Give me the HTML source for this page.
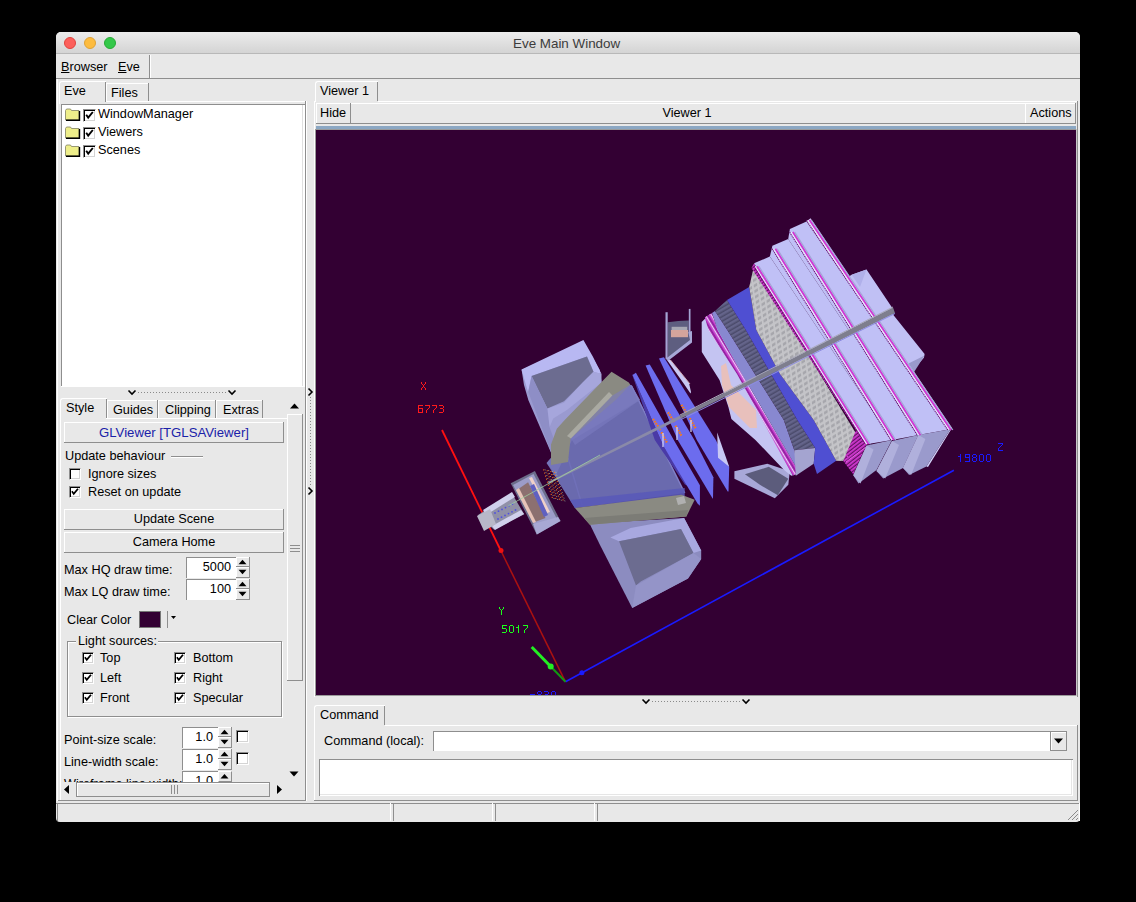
<!DOCTYPE html>
<html><head><meta charset="utf-8">
<style>
*{margin:0;padding:0;box-sizing:border-box}
html,body{width:1136px;height:902px;background:#000;overflow:hidden;font-family:"Liberation Sans",sans-serif;font-size:12.7px;color:#000}
.a{position:absolute}
.t{position:absolute;white-space:nowrap;line-height:1}
#win{position:absolute;left:56px;top:32px;width:1024px;height:790px;background:#e8e8e8;border-radius:5px 5px 4px 4px;overflow:hidden}
#title{position:absolute;left:0;top:0;width:1024px;height:22px;background:linear-gradient(#ececec,#d4d4d4);border-bottom:1px solid #b8b8b8}
.dot{position:absolute;top:5px;width:12px;height:12px;border-radius:50%}
svg.a{overflow:visible}
</style></head><body>
<div id="win">
 <div id="title">
  <div class="dot" style="left:8px;background:#fc605c;border:1px solid #e0443e"></div>
  <div class="dot" style="left:28px;background:#fdbc40;border:1px solid #dea236"></div>
  <div class="dot" style="left:48px;background:#34c84a;border:1px solid #27aa35"></div>
  <div class="t" style="left:457px;top:5px;color:#3c3c3c;font-size:13.4px">Eve Main Window</div>
 </div>
</div>
<div class="a" style="left:0;top:0;width:1136px;height:902px">

<div class="t" style="left:61px;top:61px"><u>B</u>rowser</div>
<div class="t" style="left:118px;top:61px"><u>E</u>ve</div>
<div class="a" style="left:149px;top:55px;width:1px;height:23px;background:#8e8e8e;"></div>
<div class="a" style="left:150px;top:55px;width:1px;height:23px;background:#fff;"></div>
<div class="a" style="left:56px;top:78px;width:1024px;height:1px;background:#8e8e8e;"></div>
<div class="a" style="left:57px;top:79px;width:1px;height:722px;background:#fff;"></div>
<div class="a" style="left:59px;top:81px;width:47px;height:23px;border-top:1px solid #fff;border-left:1px solid #fff;border-radius:3px 0 0 0"></div>
<div class="a" style="left:105px;top:82px;width:1px;height:20px;background:#8e8e8e;"></div>
<div class="t" style="left:64px;top:85px;font-size:12.7px;color:#000;">Eve</div>
<div class="a" style="left:106px;top:83px;width:42px;height:1px;background:#fff;"></div>
<div class="a" style="left:106px;top:83px;width:1px;height:18px;background:#fff;"></div>
<div class="a" style="left:148px;top:83px;width:1px;height:18px;background:#8e8e8e;"></div>
<div class="t" style="left:111px;top:87px;font-size:12.7px;color:#000;">Files</div>
<div class="a" style="left:106px;top:101px;width:200px;height:1px;background:#fff;"></div>
<div class="a" style="left:61px;top:104px;width:245px;height:283px;background:#fff;"></div>
<div class="a" style="left:61px;top:104px;width:245px;height:1px;background:#8e8e8e;"></div>
<div class="a" style="left:61px;top:104px;width:1px;height:283px;background:#8e8e8e;"></div>
<div class="a" style="left:61px;top:386px;width:245px;height:1px;background:#fff;"></div>
<div class="a" style="left:305px;top:104px;width:1px;height:283px;background:#fff;"></div>
<div class="a" style="left:305px;top:104px;width:1px;height:283px;background:#8e8e8e;"></div>
<div class="a" style="left:302px;top:105px;width:1px;height:281px;background:#e0e0e0;"></div>
<svg class="a" style="left:65px;top:108px" width="16" height="13" viewBox="0 0 16 13"><path d="M0.5 2.5 L1.5 1 L5.5 1 L6.5 2.5 L14 2.5 L14 12 L0.5 12 Z" fill="#eeee8a" stroke="#808060" stroke-width="0.8"/><path d="M1 12.2 L14.5 12.2 L14.5 3" stroke="#000" stroke-width="1.4" fill="none"/></svg>
<div class="a" style="left:83px;top:109px;width:13px;height:13px;background:#fff;border-top:1px solid #8e8e8e;border-left:1px solid #8e8e8e;border-right:1px solid #fff;border-bottom:1px solid #fff;box-shadow:inset 1px 1px 0 #000, inset -1px -1px 0 #d4d4d4"></div>
<svg class="a" style="left:83px;top:109px" width="12" height="12" viewBox="0 0 12 12"><path d="M3.2 5.8 L5.2 8.6 L9.8 3" stroke="#000" stroke-width="1.9" fill="none"/></svg>
<div class="t" style="left:98px;top:108px;font-size:12.7px;color:#000;">WindowManager</div>
<svg class="a" style="left:65px;top:126px" width="16" height="13" viewBox="0 0 16 13"><path d="M0.5 2.5 L1.5 1 L5.5 1 L6.5 2.5 L14 2.5 L14 12 L0.5 12 Z" fill="#eeee8a" stroke="#808060" stroke-width="0.8"/><path d="M1 12.2 L14.5 12.2 L14.5 3" stroke="#000" stroke-width="1.4" fill="none"/></svg>
<div class="a" style="left:83px;top:127px;width:13px;height:13px;background:#fff;border-top:1px solid #8e8e8e;border-left:1px solid #8e8e8e;border-right:1px solid #fff;border-bottom:1px solid #fff;box-shadow:inset 1px 1px 0 #000, inset -1px -1px 0 #d4d4d4"></div>
<svg class="a" style="left:83px;top:127px" width="12" height="12" viewBox="0 0 12 12"><path d="M3.2 5.8 L5.2 8.6 L9.8 3" stroke="#000" stroke-width="1.9" fill="none"/></svg>
<div class="t" style="left:98px;top:126px;font-size:12.7px;color:#000;">Viewers</div>
<svg class="a" style="left:65px;top:144px" width="16" height="13" viewBox="0 0 16 13"><path d="M0.5 2.5 L1.5 1 L5.5 1 L6.5 2.5 L14 2.5 L14 12 L0.5 12 Z" fill="#eeee8a" stroke="#808060" stroke-width="0.8"/><path d="M1 12.2 L14.5 12.2 L14.5 3" stroke="#000" stroke-width="1.4" fill="none"/></svg>
<div class="a" style="left:83px;top:145px;width:13px;height:13px;background:#fff;border-top:1px solid #8e8e8e;border-left:1px solid #8e8e8e;border-right:1px solid #fff;border-bottom:1px solid #fff;box-shadow:inset 1px 1px 0 #000, inset -1px -1px 0 #d4d4d4"></div>
<svg class="a" style="left:83px;top:145px" width="12" height="12" viewBox="0 0 12 12"><path d="M3.2 5.8 L5.2 8.6 L9.8 3" stroke="#000" stroke-width="1.9" fill="none"/></svg>
<div class="t" style="left:98px;top:144px;font-size:12.7px;color:#000;">Scenes</div>
<svg class="a" style="left:128px;top:390px" width="8" height="5" viewBox="0 0 8 5"><path d="M0.5 0.5 L4 4 L7.5 0.5" stroke="#000" stroke-width="1.6" fill="none"/></svg>
<svg class="a" style="left:228px;top:390px" width="8" height="5" viewBox="0 0 8 5"><path d="M0.5 0.5 L4 4 L7.5 0.5" stroke="#000" stroke-width="1.6" fill="none"/></svg>
<div class="a" style="left:138px;top:392px;width:90px;height:1px;background:repeating-linear-gradient(90deg,#8a8a8a 0 1px,transparent 1px 3px)"></div>
<div class="a" style="left:60px;top:398px;width:47px;height:21px;border-top:1px solid #fff;border-left:1px solid #fff;border-radius:3px 0 0 0"></div>
<div class="a" style="left:106px;top:399px;width:1px;height:19px;background:#8e8e8e;"></div>
<div class="t" style="left:66px;top:402px;font-size:12.7px;color:#000;">Style</div>
<div class="a" style="left:107px;top:400px;width:51px;height:1px;background:#fff;"></div>
<div class="a" style="left:107px;top:400px;width:1px;height:18px;background:#fff;"></div>
<div class="a" style="left:157px;top:400px;width:1px;height:18px;background:#8e8e8e;"></div>
<div class="t" style="left:113px;top:404px;font-size:12.7px;color:#000;">Guides</div>
<div class="a" style="left:158px;top:400px;width:58px;height:1px;background:#fff;"></div>
<div class="a" style="left:158px;top:400px;width:1px;height:18px;background:#fff;"></div>
<div class="a" style="left:215px;top:400px;width:1px;height:18px;background:#8e8e8e;"></div>
<div class="t" style="left:165px;top:404px;font-size:12.7px;color:#000;">Clipping</div>
<div class="a" style="left:216px;top:400px;width:47px;height:1px;background:#fff;"></div>
<div class="a" style="left:216px;top:400px;width:1px;height:18px;background:#fff;"></div>
<div class="a" style="left:262px;top:400px;width:1px;height:18px;background:#8e8e8e;"></div>
<div class="t" style="left:223px;top:404px;font-size:12.7px;color:#000;">Extras</div>
<div class="a" style="left:106px;top:418px;width:181px;height:1px;background:#fff;"></div>
<div class="a" style="left:60px;top:418px;width:1px;height:382px;background:#fff;"></div>
<div class="a" style="left:64px;top:422px;width:220px;height:1px;background:#fff;"></div>
<div class="a" style="left:64px;top:422px;width:1px;height:21px;background:#fff;"></div>
<div class="a" style="left:64px;top:442px;width:220px;height:1px;background:#8e8e8e;"></div>
<div class="a" style="left:283px;top:422px;width:1px;height:21px;background:#8e8e8e;"></div>
<div class="t" style="left:-126px;width:600px;text-align:center;top:426px;font-size:13.2px;color:#1a22a8;">GLViewer [TGLSAViewer]</div>
<div class="t" style="left:65px;top:450px;font-size:12.7px;color:#000;">Update behaviour</div>
<div class="a" style="left:171px;top:456px;width:32px;height:1px;background:#8e8e8e;"></div>
<div class="a" style="left:171px;top:457px;width:32px;height:1px;background:#fff;"></div>
<div class="a" style="left:69px;top:468px;width:12px;height:12px;background:#fff;border-top:1px solid #8e8e8e;border-left:1px solid #8e8e8e;border-right:1px solid #fff;border-bottom:1px solid #fff;box-shadow:inset 1px 1px 0 #000, inset -1px -1px 0 #d4d4d4"></div>
<div class="t" style="left:88px;top:468px;font-size:12.7px;color:#000;">Ignore sizes</div>
<div class="a" style="left:69px;top:486px;width:12px;height:12px;background:#fff;border-top:1px solid #8e8e8e;border-left:1px solid #8e8e8e;border-right:1px solid #fff;border-bottom:1px solid #fff;box-shadow:inset 1px 1px 0 #000, inset -1px -1px 0 #d4d4d4"></div>
<svg class="a" style="left:69px;top:486px" width="11" height="11" viewBox="0 0 12 12"><path d="M3.2 5.8 L5.2 8.6 L9.8 3" stroke="#000" stroke-width="1.9" fill="none"/></svg>
<div class="t" style="left:88px;top:486px;font-size:12.7px;color:#000;">Reset on update</div>
<div class="a" style="left:64px;top:509px;width:220px;height:1px;background:#fff;"></div>
<div class="a" style="left:64px;top:509px;width:1px;height:21px;background:#fff;"></div>
<div class="a" style="left:64px;top:529px;width:220px;height:1px;background:#8e8e8e;"></div>
<div class="a" style="left:283px;top:509px;width:1px;height:21px;background:#8e8e8e;"></div>
<div class="t" style="left:-126px;width:600px;text-align:center;top:513px;font-size:12.7px;color:#000;">Update Scene</div>
<div class="a" style="left:64px;top:532px;width:220px;height:1px;background:#fff;"></div>
<div class="a" style="left:64px;top:532px;width:1px;height:21px;background:#fff;"></div>
<div class="a" style="left:64px;top:552px;width:220px;height:1px;background:#8e8e8e;"></div>
<div class="a" style="left:283px;top:532px;width:1px;height:21px;background:#8e8e8e;"></div>
<div class="t" style="left:-126px;width:600px;text-align:center;top:536px;font-size:12.7px;color:#000;">Camera Home</div>
<div class="t" style="left:64px;top:564px;font-size:12.7px;color:#000;">Max HQ draw time:</div>
<div class="a" style="left:186px;top:557px;width:50px;height:21px;background:#fff;"></div>
<div class="a" style="left:186px;top:557px;width:50px;height:1px;background:#8e8e8e;"></div>
<div class="a" style="left:186px;top:557px;width:1px;height:21px;background:#8e8e8e;"></div>
<div class="t" style="left:-69px;width:300px;text-align:right;top:561px;font-size:12.7px;color:#000">5000</div>
<div class="a" style="left:236px;top:557px;width:14px;height:21px;background:#e8e8e8;"></div>
<div class="a" style="left:236px;top:557px;width:13px;height:1px;background:#fff;"></div>
<div class="a" style="left:236px;top:557px;width:1px;height:21px;background:#fff;"></div>
<div class="a" style="left:236px;top:566px;width:13px;height:1px;background:#8e8e8e;"></div>
<div class="a" style="left:236px;top:567px;width:13px;height:1px;background:#fff;"></div>
<div class="a" style="left:249px;top:557px;width:1px;height:21px;background:#8e8e8e;"></div>
<div class="a" style="left:236px;top:577px;width:14px;height:1px;background:#8e8e8e;"></div>
<svg class="a" style="left:0;top:0;overflow:visible" width="1" height="1"><path d="M238.5 564.25 L246.5 564.25 L242.5 559.75 Z" fill="#000"/></svg>
<svg class="a" style="left:0;top:0;overflow:visible" width="1" height="1"><path d="M238.5 569.75 L246.5 569.75 L242.5 574.25 Z" fill="#000"/></svg>
<div class="t" style="left:64px;top:586px;font-size:12.7px;color:#000;">Max LQ draw time:</div>
<div class="a" style="left:186px;top:579px;width:50px;height:21px;background:#fff;"></div>
<div class="a" style="left:186px;top:579px;width:50px;height:1px;background:#8e8e8e;"></div>
<div class="a" style="left:186px;top:579px;width:1px;height:21px;background:#8e8e8e;"></div>
<div class="t" style="left:-69px;width:300px;text-align:right;top:583px;font-size:12.7px;color:#000">100</div>
<div class="a" style="left:236px;top:579px;width:14px;height:21px;background:#e8e8e8;"></div>
<div class="a" style="left:236px;top:579px;width:13px;height:1px;background:#fff;"></div>
<div class="a" style="left:236px;top:579px;width:1px;height:21px;background:#fff;"></div>
<div class="a" style="left:236px;top:588px;width:13px;height:1px;background:#8e8e8e;"></div>
<div class="a" style="left:236px;top:589px;width:13px;height:1px;background:#fff;"></div>
<div class="a" style="left:249px;top:579px;width:1px;height:21px;background:#8e8e8e;"></div>
<div class="a" style="left:236px;top:599px;width:14px;height:1px;background:#8e8e8e;"></div>
<svg class="a" style="left:0;top:0;overflow:visible" width="1" height="1"><path d="M238.5 586.25 L246.5 586.25 L242.5 581.75 Z" fill="#000"/></svg>
<svg class="a" style="left:0;top:0;overflow:visible" width="1" height="1"><path d="M238.5 591.75 L246.5 591.75 L242.5 596.25 Z" fill="#000"/></svg>
<div class="t" style="left:67px;top:614px;font-size:12.7px;color:#000;">Clear Color</div>
<div class="a" style="left:139px;top:611px;width:22px;height:17px;background:#330033;border:1px solid #777"></div>
<div class="a" style="left:167px;top:611px;width:1px;height:17px;background:#8e8e8e;"></div>
<svg class="a" style="left:0;top:0;overflow:visible" width="1" height="1"><path d="M171.0 616.0 L176.0 616.0 L173.5 619.0 Z" fill="#000"/></svg>
<div class="a" style="left:67px;top:641px;width:215px;height:76px;border:1px solid #8e8e8e;box-shadow:1px 1px 0 #fff, inset 1px 1px 0 #fff"></div>
<div class="a" style="left:76px;top:636px;width:82px;height:12px;background:#e8e8e8;"></div>
<div class="t" style="left:78px;top:635px;font-size:12.7px;color:#000;">Light sources:</div>
<div class="a" style="left:82px;top:652px;width:12px;height:12px;background:#fff;border-top:1px solid #8e8e8e;border-left:1px solid #8e8e8e;border-right:1px solid #fff;border-bottom:1px solid #fff;box-shadow:inset 1px 1px 0 #000, inset -1px -1px 0 #d4d4d4"></div>
<svg class="a" style="left:82px;top:652px" width="11" height="11" viewBox="0 0 12 12"><path d="M3.2 5.8 L5.2 8.6 L9.8 3" stroke="#000" stroke-width="1.9" fill="none"/></svg>
<div class="t" style="left:100px;top:652px;font-size:12.7px;color:#000;">Top</div>
<div class="a" style="left:174px;top:652px;width:12px;height:12px;background:#fff;border-top:1px solid #8e8e8e;border-left:1px solid #8e8e8e;border-right:1px solid #fff;border-bottom:1px solid #fff;box-shadow:inset 1px 1px 0 #000, inset -1px -1px 0 #d4d4d4"></div>
<svg class="a" style="left:174px;top:652px" width="11" height="11" viewBox="0 0 12 12"><path d="M3.2 5.8 L5.2 8.6 L9.8 3" stroke="#000" stroke-width="1.9" fill="none"/></svg>
<div class="t" style="left:193px;top:652px;font-size:12.7px;color:#000;">Bottom</div>
<div class="a" style="left:82px;top:672px;width:12px;height:12px;background:#fff;border-top:1px solid #8e8e8e;border-left:1px solid #8e8e8e;border-right:1px solid #fff;border-bottom:1px solid #fff;box-shadow:inset 1px 1px 0 #000, inset -1px -1px 0 #d4d4d4"></div>
<svg class="a" style="left:82px;top:672px" width="11" height="11" viewBox="0 0 12 12"><path d="M3.2 5.8 L5.2 8.6 L9.8 3" stroke="#000" stroke-width="1.9" fill="none"/></svg>
<div class="t" style="left:100px;top:672px;font-size:12.7px;color:#000;">Left</div>
<div class="a" style="left:174px;top:672px;width:12px;height:12px;background:#fff;border-top:1px solid #8e8e8e;border-left:1px solid #8e8e8e;border-right:1px solid #fff;border-bottom:1px solid #fff;box-shadow:inset 1px 1px 0 #000, inset -1px -1px 0 #d4d4d4"></div>
<svg class="a" style="left:174px;top:672px" width="11" height="11" viewBox="0 0 12 12"><path d="M3.2 5.8 L5.2 8.6 L9.8 3" stroke="#000" stroke-width="1.9" fill="none"/></svg>
<div class="t" style="left:193px;top:672px;font-size:12.7px;color:#000;">Right</div>
<div class="a" style="left:82px;top:692px;width:12px;height:12px;background:#fff;border-top:1px solid #8e8e8e;border-left:1px solid #8e8e8e;border-right:1px solid #fff;border-bottom:1px solid #fff;box-shadow:inset 1px 1px 0 #000, inset -1px -1px 0 #d4d4d4"></div>
<svg class="a" style="left:82px;top:692px" width="11" height="11" viewBox="0 0 12 12"><path d="M3.2 5.8 L5.2 8.6 L9.8 3" stroke="#000" stroke-width="1.9" fill="none"/></svg>
<div class="t" style="left:100px;top:692px;font-size:12.7px;color:#000;">Front</div>
<div class="a" style="left:174px;top:692px;width:12px;height:12px;background:#fff;border-top:1px solid #8e8e8e;border-left:1px solid #8e8e8e;border-right:1px solid #fff;border-bottom:1px solid #fff;box-shadow:inset 1px 1px 0 #000, inset -1px -1px 0 #d4d4d4"></div>
<svg class="a" style="left:174px;top:692px" width="11" height="11" viewBox="0 0 12 12"><path d="M3.2 5.8 L5.2 8.6 L9.8 3" stroke="#000" stroke-width="1.9" fill="none"/></svg>
<div class="t" style="left:193px;top:692px;font-size:12.7px;color:#000;">Specular</div>
<svg class="a" style="left:0;top:0;overflow:visible" width="1" height="1"><path d="M290.0 408.5 L299.0 408.5 L294.5 403.5 Z" fill="#000"/></svg>
<div class="a" style="left:287px;top:414px;width:16px;height:1px;background:#fff;"></div>
<div class="a" style="left:287px;top:414px;width:1px;height:267px;background:#fff;"></div>
<div class="a" style="left:287px;top:680px;width:16px;height:1px;background:#8e8e8e;"></div>
<div class="a" style="left:302px;top:414px;width:1px;height:267px;background:#8e8e8e;"></div>
<div class="a" style="left:290px;top:545px;width:10px;height:1px;background:#8e8e8e;"></div>
<div class="a" style="left:290px;top:548px;width:10px;height:1px;background:#8e8e8e;"></div>
<div class="a" style="left:290px;top:551px;width:10px;height:1px;background:#8e8e8e;"></div>
<div class="t" style="left:64px;top:734px;font-size:12.7px;color:#000;">Point-size scale:</div>
<div class="a" style="left:182px;top:727px;width:36px;height:21px;background:#fff;"></div>
<div class="a" style="left:182px;top:727px;width:36px;height:1px;background:#8e8e8e;"></div>
<div class="a" style="left:182px;top:727px;width:1px;height:21px;background:#8e8e8e;"></div>
<div class="t" style="left:-87px;width:300px;text-align:right;top:731px;font-size:12.7px;color:#000">1.0</div>
<div class="a" style="left:218px;top:727px;width:14px;height:21px;background:#e8e8e8;"></div>
<div class="a" style="left:218px;top:727px;width:13px;height:1px;background:#fff;"></div>
<div class="a" style="left:218px;top:727px;width:1px;height:21px;background:#fff;"></div>
<div class="a" style="left:218px;top:736px;width:13px;height:1px;background:#8e8e8e;"></div>
<div class="a" style="left:218px;top:737px;width:13px;height:1px;background:#fff;"></div>
<div class="a" style="left:231px;top:727px;width:1px;height:21px;background:#8e8e8e;"></div>
<div class="a" style="left:218px;top:747px;width:14px;height:1px;background:#8e8e8e;"></div>
<svg class="a" style="left:0;top:0;overflow:visible" width="1" height="1"><path d="M220.5 734.25 L228.5 734.25 L224.5 729.75 Z" fill="#000"/></svg>
<svg class="a" style="left:0;top:0;overflow:visible" width="1" height="1"><path d="M220.5 739.75 L228.5 739.75 L224.5 744.25 Z" fill="#000"/></svg>
<div class="a" style="left:236px;top:730px;width:13px;height:13px;background:#fff;border-top:1px solid #8e8e8e;border-left:1px solid #8e8e8e;border-right:1px solid #fff;border-bottom:1px solid #fff;box-shadow:inset 1px 1px 0 #000, inset -1px -1px 0 #d4d4d4"></div>
<div class="t" style="left:64px;top:756px;font-size:12.7px;color:#000;">Line-width scale:</div>
<div class="a" style="left:182px;top:749px;width:36px;height:21px;background:#fff;"></div>
<div class="a" style="left:182px;top:749px;width:36px;height:1px;background:#8e8e8e;"></div>
<div class="a" style="left:182px;top:749px;width:1px;height:21px;background:#8e8e8e;"></div>
<div class="t" style="left:-87px;width:300px;text-align:right;top:753px;font-size:12.7px;color:#000">1.0</div>
<div class="a" style="left:218px;top:749px;width:14px;height:21px;background:#e8e8e8;"></div>
<div class="a" style="left:218px;top:749px;width:13px;height:1px;background:#fff;"></div>
<div class="a" style="left:218px;top:749px;width:1px;height:21px;background:#fff;"></div>
<div class="a" style="left:218px;top:758px;width:13px;height:1px;background:#8e8e8e;"></div>
<div class="a" style="left:218px;top:759px;width:13px;height:1px;background:#fff;"></div>
<div class="a" style="left:231px;top:749px;width:1px;height:21px;background:#8e8e8e;"></div>
<div class="a" style="left:218px;top:769px;width:14px;height:1px;background:#8e8e8e;"></div>
<svg class="a" style="left:0;top:0;overflow:visible" width="1" height="1"><path d="M220.5 756.25 L228.5 756.25 L224.5 751.75 Z" fill="#000"/></svg>
<svg class="a" style="left:0;top:0;overflow:visible" width="1" height="1"><path d="M220.5 761.75 L228.5 761.75 L224.5 766.25 Z" fill="#000"/></svg>
<div class="a" style="left:236px;top:752px;width:13px;height:13px;background:#fff;border-top:1px solid #8e8e8e;border-left:1px solid #8e8e8e;border-right:1px solid #fff;border-bottom:1px solid #fff;box-shadow:inset 1px 1px 0 #000, inset -1px -1px 0 #d4d4d4"></div>
<div class="a" style="left:60px;top:771px;width:227px;height:11px;overflow:hidden">
<div class="t" style="left:4px;top:7px">Wireframe line width:</div>
<div class="a" style="left:122px;top:0px;width:36px;height:21px;background:#fff;border-top:1px solid #8e8e8e;border-left:1px solid #8e8e8e"></div>
<div class="t" style="left:122px;width:31px;text-align:right;top:4px">1.0</div>
<div class="a" style="left:158px;top:0;width:14px;height:11px;border-top:1px solid #fff;border-left:1px solid #fff;border-right:1px solid #8e8e8e;border-bottom:1px solid #8e8e8e"><svg width="14" height="11" style="position:absolute;left:-1px;top:-1px"><path d="M2.5 7.5 L10.5 7.5 L6.5 3 Z" fill="#000"/></svg></div>
</div>
<svg class="a" style="left:0;top:0;overflow:visible" width="1" height="1"><path d="M289.5 771.5 L298.5 771.5 L294 776.5 Z" fill="#000"/></svg>
<svg class="a" style="left:64px;top:785px" width="6" height="9"><path d="M5 0 L5 9 L0 4.5 Z" fill="#000"/></svg>
<div class="a" style="left:76px;top:782px;width:194px;height:15px;border:1px solid #8e8e8e;box-shadow:inset 1px 1px 0 #fff"></div>
<div class="a" style="left:171px;top:785px;width:1px;height:9px;background:#8e8e8e;"></div>
<div class="a" style="left:174px;top:785px;width:1px;height:9px;background:#8e8e8e;"></div>
<div class="a" style="left:177px;top:785px;width:1px;height:9px;background:#8e8e8e;"></div>
<svg class="a" style="left:277px;top:785px" width="6" height="9"><path d="M0 0 L0 9 L5 4.5 Z" fill="#000"/></svg>
<div class="a" style="left:58px;top:800px;width:248px;height:1px;background:#8e8e8e;"></div>
<div class="a" style="left:305px;top:101px;width:1px;height:700px;background:#8e8e8e;"></div>
<div class="a" style="left:306px;top:101px;width:1px;height:700px;background:#fff;"></div>
<svg class="a" style="left:308px;top:388px" width="5" height="8" viewBox="0 0 5 8"><path d="M0.5 0.5 L4 4 L0.5 7.5" stroke="#000" stroke-width="1.6" fill="none"/></svg>
<svg class="a" style="left:308px;top:487px" width="5" height="8" viewBox="0 0 5 8"><path d="M0.5 0.5 L4 4 L0.5 7.5" stroke="#000" stroke-width="1.6" fill="none"/></svg>
<div class="a" style="left:310px;top:397px;width:1px;height:90px;background:repeating-linear-gradient(180deg,#8a8a8a 0 1px,transparent 1px 3px)"></div>
<div class="a" style="left:314px;top:82px;width:1px;height:0px;background:#fff;"></div>
<div class="a" style="left:316px;top:130px;width:760px;height:565px;background:#330033;overflow:hidden">
<svg width="760" height="565" style="position:absolute;left:0;top:0"><defs>
<pattern id="grid" width="6" height="5" patternUnits="userSpaceOnUse" patternTransform="rotate(-32) skewX(-25)"><rect width="6" height="5" fill="#c4c4c8"/><rect x="1" y="1" width="4" height="2.5" fill="#a6a6ac"/></pattern>
<pattern id="mstripe" width="4" height="3" patternUnits="userSpaceOnUse" patternTransform="rotate(-38)"><rect width="4" height="3" fill="#d038d0"/><rect y="1.8" width="4" height="1.2" fill="#601060"/></pattern>
<pattern id="mpat" width="5" height="4" patternUnits="userSpaceOnUse" patternTransform="rotate(-31)"><rect width="5" height="4" fill="#c038c8"/><rect x="1.8" width="1.1" height="4" fill="#f0e0ff"/><rect x="3.6" width="1.2" height="4" fill="#801890"/></pattern>
<pattern id="dstripe" width="5" height="4" patternUnits="userSpaceOnUse" patternTransform="rotate(-30)"><rect width="5" height="4" fill="#64648a"/><rect y="2.5" width="5" height="1.5" fill="#4a4a6a"/></pattern>
</defs><g transform="translate(-316,-130)"><line x1="442" y1="430" x2="501" y2="551" stroke="#ff1010" stroke-width="1.8"/>
<line x1="501" y1="551" x2="565.5" y2="681.8" stroke="#aa1111" stroke-width="1.5"/>
<circle cx="501" cy="550.6" r="2.5" fill="#ee1111"/>
<line x1="565.5" y1="681.8" x2="953.9" y2="470.2" stroke="#1a1aff" stroke-width="1.6"/>
<circle cx="581.9" cy="672.8" r="2.5" fill="#1a1aff"/>
<polygon points="589.5,523.5 684.1,518 701.2,550.6 701.2,559.1 688,578.5 632.2,608 600,545" fill="#8c8cc0"/>
<polygon points="610.4,537.4 630.6,528.1 684.1,518 701.2,550.6 693.5,552.9 681,528.9 619,541.3" fill="#a8a8e0"/>
<polygon points="619,541.3 681,528.9 693.5,552.9 640.7,581.6 636,585.5" fill="#6c6c90"/>
<polygon points="636,585.5 693.5,552.9 701.2,559.1 688,578.5 632.2,608" fill="#9494c8"/>
<polygon points="521.6,369.9 583.2,341.6 599.8,369.9 602,385 625,382 575,440 553.3,458 528.3,399.9 524,385" fill="#9a9ad0"/>
<polygon points="521.5,369.6 583.4,340 592.8,356.6 601.5,373.9 593.5,371.7 587,356.6 531.6,376 528,392" fill="#b8b8f2"/>
<polygon points="531.6,376 587,356.6 593.5,371.7 582.7,382.6 564,401.3 547.4,408.5" fill="#6c6c90"/>
<polygon points="543.8,409.9 564,402.7 582.7,382.6 593.5,371.7 601.5,373.9 601.5,382.6 566.9,409.9 553.2,418.6 549.6,427.2" fill="#a6a6dc"/>
<polygon points="528.3,392 531.6,376 547.4,408.5 549.6,427.2 556,445 551,452" fill="#8e8ec6"/>
<polygon points="546.6,463.1 614.8,384.9 631.5,384.9 684.7,493 574.9,508" fill="#6a6aae"/>
<polygon points="546.6,463.1 614.8,384.9 631.5,384.9 640,400 572,440 556,475" fill="#7878bc" fill-opacity="0.8"/>
<line x1="631.5" y1="386" x2="684.7" y2="493" stroke="#8080c8" stroke-width="1.5"/>
<line x1="568" y1="458" x2="582" y2="505" stroke="#7070b8" stroke-width="1.5"/>
<polygon points="570,500 684.7,488 684.7,496 574.9,508" fill="#5a5ab8" fill-opacity="0.9"/>
<polygon points="551,444.5 556.8,428.7 564.7,420 611.5,371.7 628.8,382.6 630.3,384.7 615.9,399.8 570.5,438.7 568,462 551,465" fill="#8a8a82"/>
<polygon points="567,436 571,438.5 612.5,395.5 609,392" fill="#aaaaa2"/>
<polygon points="571,438.5 612.5,395.5 630.3,384.7 640,400 575,445" fill="#7c7cc0" fill-opacity="0.6"/>
<polygon points="574.9,508 681.4,494.7 694.7,499.7 686.4,516.4 589.9,524.7" fill="#8a8a82"/>
<polygon points="584,518 688,510 686.4,516.4 589.9,524.7" fill="#7c7c76"/>
<polygon points="676,498 684,496 686,503 678,505" fill="#b0b0b0"/>
<polygon points="631.7,373.2 633,376 663.5,446.3 690,487 684.9,484.4 654.8,440" fill="#4a3aa6"/>
<polygon points="632.5,375 635.9,372.7 673.8,440 699.9,485.2 699.9,505.8 697.5,503.4 663.5,446.3" fill="#6c6cee"/>
<polygon points="645.6,365.4 649.8,364.6 694.4,440 713.4,477.2 713,498.6 712.6,498.6 677.7,440" fill="#6c6cee"/>
<polygon points="659,358.5 663.9,357.3 715.8,440 729.2,466.9 728.5,491.5 727.7,491.5 696.8,440" fill="#6c6cee"/>
<polygon points="667,360 670,359.5 689,383 691,392 690.5,393.5 684,384" fill="#c8c8f4"/>
<line x1="670.5" y1="360" x2="690" y2="384" stroke="#e8c0c0" stroke-width="0.8"/>
<polygon points="717.2,432.4 729.2,466.8 718,457.8" fill="#c8c8f4"/>
<line x1="653" y1="419" x2="660.6" y2="430" stroke="#ff7a10" stroke-width="2.2" stroke-dasharray="1.5 1"/>
<line x1="661.4" y1="432.3" x2="667.2" y2="443.2" stroke="#ff7a10" stroke-width="2.2" stroke-dasharray="1.5 1"/>
<line x1="668" y1="412.4" x2="674.7" y2="422.4" stroke="#ff7a10" stroke-width="2.2" stroke-dasharray="1.5 1"/>
<line x1="675.5" y1="425.7" x2="681.4" y2="435.7" stroke="#ff7a10" stroke-width="2.2" stroke-dasharray="1.5 1"/>
<line x1="681.4" y1="404.9" x2="688" y2="414.9" stroke="#ff7a10" stroke-width="2.2" stroke-dasharray="1.5 1"/>
<line x1="689.7" y1="418.2" x2="695.5" y2="428.2" stroke="#ff7a10" stroke-width="2.2" stroke-dasharray="1.5 1"/>
<line x1="663" y1="433" x2="663" y2="447" stroke="#d8d8f8" stroke-width="1.2"/>
<line x1="677" y1="427" x2="677" y2="440" stroke="#d8d8f8" stroke-width="1.2"/>
<line x1="691" y1="420" x2="691" y2="432" stroke="#d8d8f8" stroke-width="1.2"/>
<polygon points="667.7,322.2 678.3,321 688.8,320.5 688.8,332 690.5,332 690.5,342 668,358.8" fill="#5e5e80"/>
<polygon points="665.5,312.2 667.7,312.2 667.7,358.8 665.5,358.8" fill="#a4a4d4"/>
<polygon points="688.8,308.9 690.5,308.9 690.5,332 688.8,332" fill="#a4a4d4"/>
<polygon points="688.3,332 692,331 692,342.5 668.5,360.5 665.5,359 690,340" fill="#a8a8d8"/>
<polygon points="671,330 688,330 688,337.2 671,337.2" fill="#d4a49c"/>
<polygon points="671.6,326.8 687.2,326.8 687.2,330 671.6,330" fill="#a8a8b4"/>
<polygon points="835,285 851.7,274.8 866.5,269.4 892,307.4 893.6,315.2 924.6,354 923.9,357.8 912.2,371 880,420 850,330" fill="#c0c0f4"/>
<polygon points="909,363.3 924.6,355.5 913.8,372.6 905,376" fill="#9a9acc"/>
<polygon points="851.7,274.8 866.5,269.4 860,287" fill="#b0b0ea"/>
<polygon points="734.4,471.3 767.3,463.8 789.8,471.3 788.3,484.8 774.8,498.2 734.4,478.8" fill="#a8a8d8"/>
<polygon points="744.9,474.3 768.8,466.8 788.3,478.8 777.8,495.2 759.9,484.8" fill="#5c5c7c"/>
<polygon points="701.7,322.1 701.8,352 719.5,380 728.4,406.9 731.4,418.9 755.4,439.9 783.8,469.8 791.3,475.8 797,474 710,314" fill="#c4c4f2"/>
<polygon points="721,366 726,363 731,385 756,410 757,428 750,428 729,407 722,385" fill="#e8c0bc"/>
<polygon points="704.8,317.2 712,313 717.6,330 742,374 799,472 792.8,475.8 737,374 708.4,330" fill="url(#mpat)"/>
<polygon points="712,313 715,311 727.3,330 783.8,420 794.3,450.3 799,472 742,374 717.6,330" fill="#8888d0"/>
<polygon points="715,311 727,300 745.8,330 797.3,420 815.2,448.1 794.3,450.3 783.8,420 727.3,330" fill="url(#dstripe)"/>
<polygon points="794.3,450.3 815.2,448.1 813.7,463.8 795.8,475.8" fill="#a4a4d0"/>
<polygon points="727,300 749.2,287 756.3,330 780,374 813.7,420 836.2,460.8 817,474 813.7,463.8 815.2,448.1 797.3,420 745.8,330" fill="#4f4fd2"/>
<polygon points="749.2,287 754,266 860,440 843.3,460.9 836.2,460.8 813.7,420 780,374 756.3,330" fill="url(#grid)"/>
<polygon points="751.5,268 754.1,263.2 866.6,444.3 853.3,474.2 843.3,460.9 856,430" fill="url(#mstripe)"/>
<polyline points="846,462 866,447" stroke="#e060e0" stroke-width="1"/>
<polygon points="806.5,221.6 810.5,218.3 952,428 928,467 926.4,466.4 950.3,429.2" fill="#d0d0f8"/>
<polygon points="754.1,263.2 769.9,256.6 892,440 866.6,444.3" fill="#c0c0f6"/>
<polygon points="866.6,445.4 892,440 876.5,470 858.5,483.5 853.3,475.3" fill="#9a9acc"/>
<polygon points="866.6,445.4 873.6,449.4 860.5,483.5 853.3,475.3" fill="#b0b0dc"/>
<polygon points="772.4,245.8 788.2,239.1 918.4,435 892,440 769.9,256.6" fill="#c0c0f6"/>
<polygon points="892,441 918.4,435 903,468 883.2,478.6 876.5,470.9" fill="#9a9acc"/>
<polygon points="892,441 899,445 885.2,478.6 876.5,470.9" fill="#b0b0dc"/>
<polygon points="789.9,229.1 806.5,221.6 950.3,429.2 918.4,435 788.2,239.1" fill="#c0c0f6"/>
<polygon points="918.4,435 950.3,429.2 926.4,466.4 909.1,475 903,468" fill="#9a9acc"/>
<polygon points="918.4,435 925.4,439 911.1,475 903,468" fill="#b0b0dc"/>
<line x1="753.9" y1="266.2" x2="865.4" y2="444.3" stroke="#6a1070" stroke-width="1.2" stroke-dasharray="1.2 0.8"/>
<line x1="755.3000000000001" y1="266.2" x2="866.8000000000001" y2="444.3" stroke="#eeeeff" stroke-width="1.2"/>
<line x1="757.1" y1="266.2" x2="868.6" y2="444.3" stroke="#d434d4" stroke-width="1.8"/>
<line x1="758.9" y1="266.2" x2="870.4" y2="444.3" stroke="#a4a4d8" stroke-width="1.2"/>
<line x1="772.1999999999999" y1="248.8" x2="890.8" y2="440" stroke="#6a1070" stroke-width="1.2" stroke-dasharray="1.2 0.8"/>
<line x1="773.6" y1="248.8" x2="892.2" y2="440" stroke="#eeeeff" stroke-width="1.2"/>
<line x1="775.4" y1="248.8" x2="894.0" y2="440" stroke="#d434d4" stroke-width="1.8"/>
<line x1="777.1999999999999" y1="248.8" x2="895.8" y2="440" stroke="#a4a4d8" stroke-width="1.2"/>
<line x1="789.6999999999999" y1="232.1" x2="917.1999999999999" y2="435" stroke="#6a1070" stroke-width="1.2" stroke-dasharray="1.2 0.8"/>
<line x1="791.1" y1="232.1" x2="918.6" y2="435" stroke="#eeeeff" stroke-width="1.2"/>
<line x1="792.9" y1="232.1" x2="920.4" y2="435" stroke="#d434d4" stroke-width="1.8"/>
<line x1="794.6999999999999" y1="232.1" x2="922.1999999999999" y2="435" stroke="#a4a4d8" stroke-width="1.2"/>
<line x1="806.3" y1="220" x2="947.8" y2="430" stroke="#6a1070" stroke-width="1.2" stroke-dasharray="1.2 0.8"/>
<line x1="807.7" y1="220" x2="949.2" y2="430" stroke="#eeeeff" stroke-width="1.2"/>
<line x1="809.5" y1="220" x2="951.0" y2="430" stroke="#d434d4" stroke-width="1.8"/>
<line x1="811.3" y1="220" x2="952.8" y2="430" stroke="#a4a4d8" stroke-width="1.2"/>
<polygon points="548,482 680,415.5 681,418.5 549,483.5" fill="#8a8aa8"/>
<polygon points="680,415.5 893,307.5 895,313 681,418.5" fill="#7e7e8e"/>
<line x1="681" y1="419.5" x2="895" y2="313.5" stroke="#8c8ce0" stroke-width="1"/>
<line x1="680" y1="415" x2="893" y2="307" stroke="#a8a8b8" stroke-width="1"/>
<polygon points="477.7,515.2 511.6,492.9 524.2,514.2 494.2,529.7" fill="#9090a8"/>
<polygon points="483,510 512,492 515,497 486,515" fill="#d0d0ec"/>
<polygon points="492,526 521,510 524,514 495,530" fill="#d0d0ec"/>
<polygon points="477,516 490,509 496,524 484,531" fill="#b8b8c8"/>
<circle cx="495.0" cy="513.0" r="0.9" fill="#5050e0"/>
<circle cx="498.0" cy="519.0" r="0.9" fill="#5050e0"/>
<circle cx="498.5" cy="511.2" r="0.9" fill="#5050e0"/>
<circle cx="501.5" cy="517.2" r="0.9" fill="#5050e0"/>
<circle cx="502.0" cy="509.4" r="0.9" fill="#5050e0"/>
<circle cx="505.0" cy="515.4" r="0.9" fill="#5050e0"/>
<circle cx="505.5" cy="507.6" r="0.9" fill="#5050e0"/>
<circle cx="508.5" cy="513.6" r="0.9" fill="#5050e0"/>
<circle cx="509.0" cy="505.8" r="0.9" fill="#5050e0"/>
<circle cx="512.0" cy="511.8" r="0.9" fill="#5050e0"/>
<circle cx="512.5" cy="504.0" r="0.9" fill="#5050e0"/>
<circle cx="515.5" cy="510.0" r="0.9" fill="#5050e0"/>
<polygon points="510.7,483.2 534.9,471.1 560.5,521 536.8,534.6" fill="#6c6c8a"/>
<polygon points="513,485 533.5,474 557,519 537.5,531" fill="#9c9cc8"/>
<polygon points="518.4,489 528.1,482.3 545.5,518.1 534.9,522" fill="#8c7070"/>
<polygon points="516,490 519,488 536,522 533,523" fill="#e8c4b8"/>
<polygon points="529,478 532,477 550,512 547,513" fill="#f0d0c8"/>
<polygon points="530,486 534,484 548,515 544,517" fill="#6060c0"/>
<polygon points="533,524 558,517 560.5,521 536.8,534.6" fill="#a8a8d4"/>
<line x1="543.5" y1="469.5" x2="553.0" y2="500.0" stroke="#ff7818" stroke-width="1.1" stroke-dasharray="1 2.2"/>
<line x1="545.0" y1="469.5" x2="554.5" y2="500.0" stroke="#a8d0a0" stroke-width="0.9" stroke-dasharray="0.8 2.2"/>
<line x1="547.1" y1="470.3" x2="556.6" y2="500.8" stroke="#ff7818" stroke-width="1.1" stroke-dasharray="1 2.2"/>
<line x1="548.6" y1="470.3" x2="558.1" y2="500.8" stroke="#a8d0a0" stroke-width="0.9" stroke-dasharray="0.8 2.2"/>
<line x1="550.7" y1="471.1" x2="560.2" y2="501.6" stroke="#ff7818" stroke-width="1.1" stroke-dasharray="1 2.2"/>
<line x1="552.2" y1="471.1" x2="561.7" y2="501.6" stroke="#a8d0a0" stroke-width="0.9" stroke-dasharray="0.8 2.2"/>
<line x1="554.3" y1="471.9" x2="563.8" y2="502.4" stroke="#ff7818" stroke-width="1.1" stroke-dasharray="1 2.2"/>
<line x1="555.8" y1="471.9" x2="565.3" y2="502.4" stroke="#a8d0a0" stroke-width="0.9" stroke-dasharray="0.8 2.2"/>
<line x1="508" y1="506" x2="600" y2="455" stroke="#a0d0a0" stroke-width="0.8"/>
<line x1="531.7" y1="647" x2="550.7" y2="666.5" stroke="#22ee22" stroke-width="3"/>
<line x1="550.7" y1="666.5" x2="565.5" y2="681.8" stroke="#119911" stroke-width="2"/>
<circle cx="550.7" cy="666.5" r="3" fill="#22ee22"/>
<path d="M421 382h1v1h-1zM425 382h1v1h-1zM421 383h1v1h-1zM425 383h1v1h-1zM422 384h1v1h-1zM424 384h1v1h-1zM423 385h1v1h-1zM423 386h1v1h-1zM422 387h1v1h-1zM424 387h1v1h-1zM421 388h1v1h-1zM425 388h1v1h-1zM421 389h1v1h-1zM425 389h1v1h-1z" fill="#ff1a1a"/>
<path d="M418 405h1v1h-1zM419 405h1v1h-1zM420 405h1v1h-1zM421 405h1v1h-1zM422 405h1v1h-1zM418 406h1v1h-1zM418 407h1v1h-1zM418 408h1v1h-1zM419 408h1v1h-1zM420 408h1v1h-1zM421 408h1v1h-1zM422 408h1v1h-1zM418 409h1v1h-1zM422 409h1v1h-1zM418 410h1v1h-1zM422 410h1v1h-1zM418 411h1v1h-1zM422 411h1v1h-1zM418 412h1v1h-1zM419 412h1v1h-1zM420 412h1v1h-1zM421 412h1v1h-1zM422 412h1v1h-1zM425 405h1v1h-1zM426 405h1v1h-1zM427 405h1v1h-1zM428 405h1v1h-1zM429 405h1v1h-1zM429 406h1v1h-1zM429 407h1v1h-1zM428 408h1v1h-1zM427 409h1v1h-1zM426 410h1v1h-1zM426 411h1v1h-1zM426 412h1v1h-1zM432 405h1v1h-1zM433 405h1v1h-1zM434 405h1v1h-1zM435 405h1v1h-1zM436 405h1v1h-1zM436 406h1v1h-1zM436 407h1v1h-1zM435 408h1v1h-1zM434 409h1v1h-1zM433 410h1v1h-1zM433 411h1v1h-1zM433 412h1v1h-1zM439 405h1v1h-1zM440 405h1v1h-1zM441 405h1v1h-1zM442 405h1v1h-1zM443 406h1v1h-1zM443 407h1v1h-1zM440 408h1v1h-1zM441 408h1v1h-1zM442 408h1v1h-1zM443 409h1v1h-1zM443 410h1v1h-1zM443 411h1v1h-1zM439 412h1v1h-1zM440 412h1v1h-1zM441 412h1v1h-1zM442 412h1v1h-1z" fill="#ff1a1a"/>
<path d="M499 607h1v1h-1zM503 607h1v1h-1zM499 608h1v1h-1zM503 608h1v1h-1zM500 609h1v1h-1zM502 609h1v1h-1zM501 610h1v1h-1zM501 611h1v1h-1zM501 612h1v1h-1zM501 613h1v1h-1zM501 614h1v1h-1z" fill="#1aff1a"/>
<path d="M502 625h1v1h-1zM503 625h1v1h-1zM504 625h1v1h-1zM505 625h1v1h-1zM506 625h1v1h-1zM502 626h1v1h-1zM502 627h1v1h-1zM502 628h1v1h-1zM503 628h1v1h-1zM504 628h1v1h-1zM505 628h1v1h-1zM506 629h1v1h-1zM506 630h1v1h-1zM506 631h1v1h-1zM502 632h1v1h-1zM503 632h1v1h-1zM504 632h1v1h-1zM505 632h1v1h-1zM510 625h1v1h-1zM511 625h1v1h-1zM512 625h1v1h-1zM509 626h1v1h-1zM513 626h1v1h-1zM509 627h1v1h-1zM513 627h1v1h-1zM509 628h1v1h-1zM513 628h1v1h-1zM509 629h1v1h-1zM513 629h1v1h-1zM509 630h1v1h-1zM513 630h1v1h-1zM509 631h1v1h-1zM513 631h1v1h-1zM510 632h1v1h-1zM511 632h1v1h-1zM512 632h1v1h-1zM518 625h1v1h-1zM518 626h1v1h-1zM516 627h1v1h-1zM517 627h1v1h-1zM518 627h1v1h-1zM518 628h1v1h-1zM518 629h1v1h-1zM518 630h1v1h-1zM518 631h1v1h-1zM518 632h1v1h-1zM523 625h1v1h-1zM524 625h1v1h-1zM525 625h1v1h-1zM526 625h1v1h-1zM527 625h1v1h-1zM527 626h1v1h-1zM527 627h1v1h-1zM526 628h1v1h-1zM525 629h1v1h-1zM524 630h1v1h-1zM524 631h1v1h-1zM524 632h1v1h-1z" fill="#1aff1a"/>
<path d="M960 454h1v1h-1zM960 455h1v1h-1zM958 456h1v1h-1zM959 456h1v1h-1zM960 456h1v1h-1zM960 457h1v1h-1zM960 458h1v1h-1zM960 459h1v1h-1zM960 460h1v1h-1zM960 461h1v1h-1zM965 454h1v1h-1zM966 454h1v1h-1zM967 454h1v1h-1zM968 454h1v1h-1zM969 454h1v1h-1zM965 455h1v1h-1zM969 455h1v1h-1zM965 456h1v1h-1zM969 456h1v1h-1zM965 457h1v1h-1zM966 457h1v1h-1zM967 457h1v1h-1zM968 457h1v1h-1zM969 457h1v1h-1zM969 458h1v1h-1zM969 459h1v1h-1zM969 460h1v1h-1zM965 461h1v1h-1zM966 461h1v1h-1zM967 461h1v1h-1zM968 461h1v1h-1zM969 461h1v1h-1zM973 454h1v1h-1zM974 454h1v1h-1zM975 454h1v1h-1zM972 455h1v1h-1zM976 455h1v1h-1zM972 456h1v1h-1zM976 456h1v1h-1zM973 457h1v1h-1zM974 457h1v1h-1zM975 457h1v1h-1zM972 458h1v1h-1zM976 458h1v1h-1zM972 459h1v1h-1zM976 459h1v1h-1zM972 460h1v1h-1zM976 460h1v1h-1zM973 461h1v1h-1zM974 461h1v1h-1zM975 461h1v1h-1zM980 454h1v1h-1zM981 454h1v1h-1zM982 454h1v1h-1zM979 455h1v1h-1zM983 455h1v1h-1zM979 456h1v1h-1zM983 456h1v1h-1zM979 457h1v1h-1zM983 457h1v1h-1zM979 458h1v1h-1zM983 458h1v1h-1zM979 459h1v1h-1zM983 459h1v1h-1zM979 460h1v1h-1zM983 460h1v1h-1zM980 461h1v1h-1zM981 461h1v1h-1zM982 461h1v1h-1zM987 454h1v1h-1zM988 454h1v1h-1zM989 454h1v1h-1zM986 455h1v1h-1zM990 455h1v1h-1zM986 456h1v1h-1zM990 456h1v1h-1zM986 457h1v1h-1zM990 457h1v1h-1zM986 458h1v1h-1zM990 458h1v1h-1zM986 459h1v1h-1zM990 459h1v1h-1zM986 460h1v1h-1zM990 460h1v1h-1zM987 461h1v1h-1zM988 461h1v1h-1zM989 461h1v1h-1z" fill="#1a1aff"/>
<path d="M998 443h1v1h-1zM999 443h1v1h-1zM1000 443h1v1h-1zM1001 443h1v1h-1zM1002 443h1v1h-1zM1002 444h1v1h-1zM1001 445h1v1h-1zM1000 446h1v1h-1zM999 447h1v1h-1zM998 448h1v1h-1zM998 449h1v1h-1zM998 450h1v1h-1zM999 450h1v1h-1zM1000 450h1v1h-1zM1001 450h1v1h-1zM1002 450h1v1h-1z" fill="#1a1aff"/>
<path d="M530 694h1v1h-1zM531 694h1v1h-1zM532 694h1v1h-1zM533 694h1v1h-1zM534 694h1v1h-1zM538 691h1v1h-1zM539 691h1v1h-1zM540 691h1v1h-1zM537 692h1v1h-1zM541 692h1v1h-1zM537 693h1v1h-1zM541 693h1v1h-1zM538 694h1v1h-1zM539 694h1v1h-1zM540 694h1v1h-1zM537 695h1v1h-1zM541 695h1v1h-1zM537 696h1v1h-1zM541 696h1v1h-1zM537 697h1v1h-1zM541 697h1v1h-1zM538 698h1v1h-1zM539 698h1v1h-1zM540 698h1v1h-1zM544 691h1v1h-1zM545 691h1v1h-1zM546 691h1v1h-1zM547 691h1v1h-1zM548 692h1v1h-1zM548 693h1v1h-1zM545 694h1v1h-1zM546 694h1v1h-1zM547 694h1v1h-1zM548 695h1v1h-1zM548 696h1v1h-1zM548 697h1v1h-1zM544 698h1v1h-1zM545 698h1v1h-1zM546 698h1v1h-1zM547 698h1v1h-1zM552 691h1v1h-1zM553 691h1v1h-1zM554 691h1v1h-1zM551 692h1v1h-1zM555 692h1v1h-1zM551 693h1v1h-1zM555 693h1v1h-1zM551 694h1v1h-1zM555 694h1v1h-1zM551 695h1v1h-1zM555 695h1v1h-1zM551 696h1v1h-1zM555 696h1v1h-1zM551 697h1v1h-1zM555 697h1v1h-1zM552 698h1v1h-1zM553 698h1v1h-1zM554 698h1v1h-1z" fill="#1a1aff"/></g></svg>
</div>
<div class="a" style="left:315px;top:81px;width:63px;height:21px;border-top:1px solid #fff;border-left:1px solid #fff;border-radius:3px 0 0 0"></div>
<div class="a" style="left:377px;top:82px;width:1px;height:19px;background:#8e8e8e;"></div>
<div class="t" style="left:320px;top:85px;font-size:12.7px;color:#000;">Viewer 1</div>
<div class="a" style="left:378px;top:101px;width:700px;height:1px;background:#fff;"></div>
<div class="a" style="left:1077px;top:101px;width:1px;height:596px;background:#8e8e8e;"></div>
<div class="a" style="left:314px;top:101px;width:1px;height:596px;background:#fff;"></div>
<div class="a" style="left:316px;top:103px;width:760px;height:1px;background:#fff;"></div>
<div class="a" style="left:316px;top:103px;width:35px;height:1px;background:#fff;"></div>
<div class="a" style="left:316px;top:103px;width:1px;height:21px;background:#fff;"></div>
<div class="a" style="left:316px;top:123px;width:35px;height:1px;background:#8e8e8e;"></div>
<div class="a" style="left:350px;top:103px;width:1px;height:21px;background:#8e8e8e;"></div>
<div class="t" style="left:320px;top:107px;font-size:12.7px;color:#000;">Hide</div>
<div class="t" style="left:387px;width:600px;text-align:center;top:107px;font-size:12.7px;color:#000;">Viewer 1</div>
<div class="a" style="left:1025px;top:103px;width:51px;height:1px;background:#fff;"></div>
<div class="a" style="left:1025px;top:103px;width:1px;height:21px;background:#fff;"></div>
<div class="a" style="left:1025px;top:123px;width:51px;height:1px;background:#8e8e8e;"></div>
<div class="a" style="left:1075px;top:103px;width:1px;height:21px;background:#8e8e8e;"></div>
<div class="t" style="left:1030px;top:107px;font-size:12.7px;color:#000;">Actions</div>
<div class="a" style="left:1075px;top:103px;width:1px;height:21px;background:#8e8e8e;"></div>
<div class="a" style="left:316px;top:123px;width:760px;height:1px;background:#8e8e8e;"></div>
<div class="a" style="left:316px;top:126px;width:760px;height:3px;background:#8ba7c3;"></div>
<div class="a" style="left:316px;top:129px;width:760px;height:1px;background:#9a9a9a;"></div>
<div class="a" style="left:315px;top:695px;width:762px;height:1px;background:#9a9a9a;"></div>
<div class="a" style="left:315px;top:129px;width:1px;height:567px;background:#9a9a9a;"></div>
<div class="a" style="left:1076px;top:129px;width:1px;height:567px;background:#c8c8c8;"></div>
<svg class="a" style="left:642px;top:699px" width="8" height="5" viewBox="0 0 8 5"><path d="M0.5 0.5 L4 4 L7.5 0.5" stroke="#000" stroke-width="1.6" fill="none"/></svg>
<svg class="a" style="left:742px;top:699px" width="8" height="5" viewBox="0 0 8 5"><path d="M0.5 0.5 L4 4 L7.5 0.5" stroke="#000" stroke-width="1.6" fill="none"/></svg>
<div class="a" style="left:652px;top:701px;width:89px;height:1px;background:repeating-linear-gradient(90deg,#8a8a8a 0 1px,transparent 1px 3px)"></div>
<div class="a" style="left:314px;top:705px;width:71px;height:21px;border-top:1px solid #fff;border-left:1px solid #fff;border-radius:3px 0 0 0"></div>
<div class="a" style="left:384px;top:706px;width:1px;height:19px;background:#8e8e8e;"></div>
<div class="t" style="left:320px;top:709px;font-size:12.7px;color:#000;">Command</div>
<div class="a" style="left:385px;top:725px;width:693px;height:1px;background:#fff;"></div>
<div class="a" style="left:314px;top:725px;width:1px;height:76px;background:#fff;"></div>
<div class="t" style="left:324px;top:735px;font-size:12.7px;color:#000;">Command (local):</div>
<div class="a" style="left:433px;top:731px;width:634px;height:20px;background:#fff;"></div>
<div class="a" style="left:433px;top:731px;width:634px;height:1px;background:#8e8e8e;"></div>
<div class="a" style="left:433px;top:731px;width:1px;height:20px;background:#8e8e8e;"></div>
<div class="a" style="left:1050px;top:731px;width:17px;height:20px;background:#e8e8e8;border:1px solid #8e8e8e;box-shadow:inset 1px 1px 0 #fff"></div>
<svg class="a" style="left:0;top:0;overflow:visible" width="1" height="1"><path d="M1054.0 738.5 L1063.0 738.5 L1058.5 743.5 Z" fill="#000"/></svg>
<div class="a" style="left:319px;top:759px;width:754px;height:37px;background:#fff;"></div>
<div class="a" style="left:319px;top:759px;width:754px;height:1px;background:#8e8e8e;"></div>
<div class="a" style="left:319px;top:759px;width:1px;height:37px;background:#8e8e8e;"></div>
<div class="a" style="left:320px;top:794px;width:752px;height:1px;background:#e6e6e6;"></div>
<div class="a" style="left:1071px;top:760px;width:1px;height:35px;background:#e6e6e6;"></div>
<div class="a" style="left:314px;top:800px;width:764px;height:1px;background:#8e8e8e;"></div>
<div class="a" style="left:1077px;top:725px;width:1px;height:76px;background:#8e8e8e;"></div>
<div class="a" style="left:56px;top:803px;width:1024px;height:1px;background:#8e8e8e;"></div>
<div class="a" style="left:57px;top:803px;width:1px;height:18px;background:#8e8e8e;"></div>
<div class="a" style="left:390px;top:803px;width:1px;height:18px;background:#fff;"></div>
<div class="a" style="left:393px;top:803px;width:1px;height:18px;background:#8e8e8e;"></div>
<div class="a" style="left:492px;top:803px;width:1px;height:18px;background:#fff;"></div>
<div class="a" style="left:495px;top:803px;width:1px;height:18px;background:#8e8e8e;"></div>
<div class="a" style="left:594px;top:803px;width:1px;height:18px;background:#fff;"></div>
<div class="a" style="left:597px;top:803px;width:1px;height:18px;background:#8e8e8e;"></div>
<div class="a" style="left:1079px;top:803px;width:1px;height:18px;background:#fff;"></div>
<svg class="a" style="left:1066px;top:808px" width="13" height="13"><path d="M12 2 L2 12 M12 6 L6 12 M12 10 L10 12" stroke="#8a8a8a" stroke-width="1"/></svg>
</div></body></html>
